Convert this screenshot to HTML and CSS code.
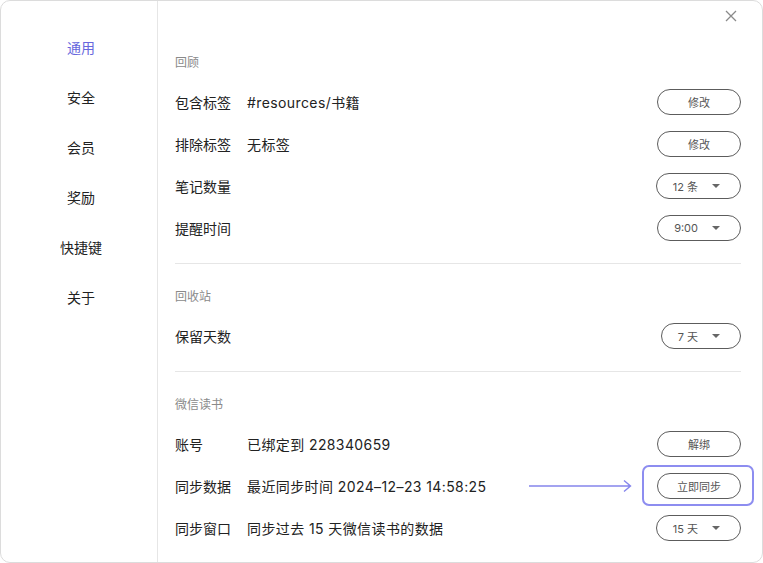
FILE: index.html
```html
<!DOCTYPE html>
<html lang="zh-CN">
<head>
<meta charset="utf-8">
<title>设置</title>
<link rel="stylesheet" href="styles.css">
</head>
<body>
<div class="dialog">
  <nav class="sidebar">
    <div class="nav-item active">通用</div>
    <div class="nav-item">安全</div>
    <div class="nav-item">会员</div>
    <div class="nav-item">奖励</div>
    <div class="nav-item">快捷键</div>
    <div class="nav-item">关于</div>
  </nav>
  <main class="content">
    <button class="close" aria-label="关闭">
      <svg width="12" height="12" viewBox="0 0 12 12"><path d="M1 1L11 11M11 1L1 11" stroke="#8a8a8a" stroke-width="1.3" fill="none"/></svg>
    </button>
    <section class="section">
      <div class="section-title">回顾</div>
      <div class="row">
        <span class="label">包含标签</span><span class="value">#resources/书籍</span>
        <button class="btn">修改</button>
      </div>
      <div class="row">
        <span class="label">排除标签</span><span class="value">无标签</span>
        <button class="btn">修改</button>
      </div>
      <div class="row">
        <span class="label">笔记数量</span><span class="value"></span>
        <button class="btn select">12 条<i class="caret"></i></button>
      </div>
      <div class="row">
        <span class="label">提醒时间</span><span class="value"></span>
        <button class="btn select">9:00<i class="caret"></i></button>
      </div>
    </section>
    <section class="section">
      <div class="section-title">回收站</div>
      <div class="row">
        <span class="label">保留天数</span><span class="value"></span>
        <button class="btn select">7 天<i class="caret"></i></button>
      </div>
    </section>
    <section class="section last">
      <div class="section-title">微信读书</div>
      <div class="row">
        <span class="label">账号</span><span class="value">已绑定到 228340659</span>
        <button class="btn">解绑</button>
      </div>
      <div class="row">
        <span class="label">同步数据</span><span class="value">最近同步时间 2024–12–23 14:58:25</span>
        <span class="highlight-wrap">
          <svg class="arrow" width="104" height="14" viewBox="0 0 104 14"><path d="M0 7H101M95 1.5L101.5 7L95 12.5" stroke="#8585ec" stroke-width="1.4" fill="none"/></svg>
          <button class="btn">立即同步</button>
        </span>
      </div>
      <div class="row">
        <span class="label">同步窗口</span><span class="value">同步过去 15 天微信读书的数据</span>
        <button class="btn select">15 天<i class="caret"></i></button>
      </div>
    </section>
  </main>
</div>
</body>
</html>
```
FILE: styles.css
```css
* { box-sizing: border-box; }
html, body {
  margin: 0;
  padding: 0;
  background: #ffffff;
}
body {
  width: 763px;
  height: 563px;
  font-family: "Inter", "Noto Sans CJK SC", sans-serif;
  color: #222;
}
.dialog {
  width: 763px;
  height: 563px;
  border: 1px solid #dcdcdc;
  border-radius: 10px;
  display: flex;
  background: #fff;
  overflow: hidden;
}
.sidebar {
  width: 157px;
  flex: none;
  border-right: 1px solid #e6e6e6;
  padding: 22px 0 0 4px;
  display: flex;
  flex-direction: column;
  align-items: center;
}
.nav-item {
  height: 50px;
  line-height: 50px;
  font-size: 14px;
  color: #222;
}
.nav-item.active { color: #6767dd; }
.content {
  flex: 1;
  position: relative;
  padding: 29px 21px 0 17px;
}
.close {
  position: absolute;
  top: 8px;
  right: 24px;
  width: 14px;
  height: 14px;
  padding: 1px;
  border: 0;
  background: none;
  display: flex;
}
.section {
  padding: 19px 0 14px;
  border-bottom: 1px solid #e6e6e6;
}
.section.last { border-bottom: 0; }
.section-title {
  height: 24px;
  line-height: 28px;
  font-size: 12px;
  color: #8a8a8a;
  margin-bottom: 8px;
}
.row {
  height: 42px;
  display: flex;
  align-items: center;
  font-size: 14px;
}
.label {
  width: 72px;
  flex: none;
}
.value {
  flex: 1;
  letter-spacing: 0.4px;
}
.btn {
  height: 26px;
  min-width: 84px;
  border: 1px solid #5c5c5c;
  border-radius: 13px;
  background: #fff;
  font-family: "Inter", "Noto Sans CJK SC", sans-serif;
  font-size: 11px;
  color: #555;
  display: flex;
  align-items: center;
  justify-content: center;
  padding: 0;
}
.btn.select {
  min-width: 0;
  justify-content: flex-start;
  padding: 0 20px 0 16px;
}
.caret {
  width: 0;
  height: 0;
  margin-left: 14px;
  border-left: 4px solid transparent;
  border-right: 4px solid transparent;
  border-top: 4px solid #666;
}
.highlight-wrap {
  position: relative;
  display: flex;
}
.highlight-wrap::before {
  content: "";
  position: absolute;
  left: -15px;
  right: -13px;
  top: -8px;
  bottom: -7px;
  border: 2px solid #8d8df0;
  border-radius: 7px;
}
.arrow {
  position: absolute;
  left: -128px;
  top: 6px;
}
```
